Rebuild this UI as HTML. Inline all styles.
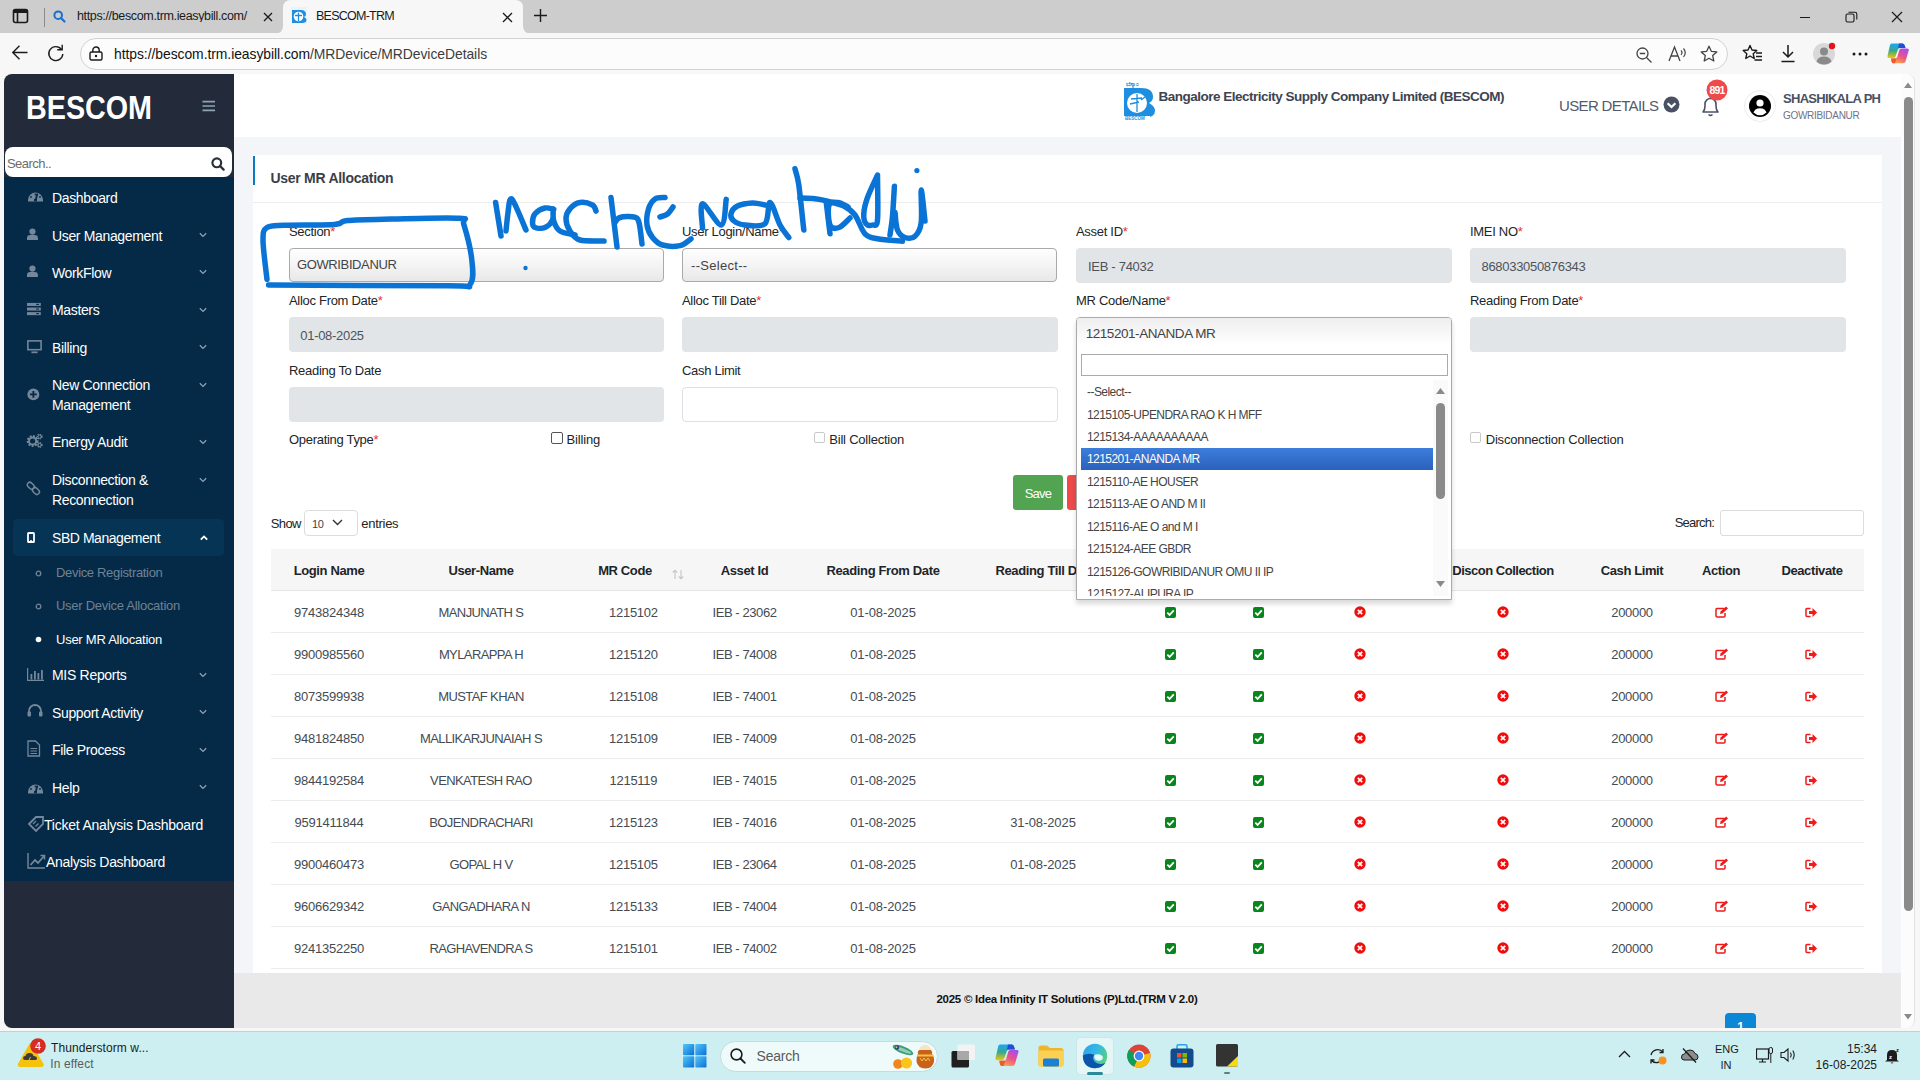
<!DOCTYPE html>
<html><head><meta charset="utf-8">
<style>
*{box-sizing:border-box;margin:0;padding:0}
html,body{width:1920px;height:1080px;overflow:hidden;background:#f7f7f7;font-family:"Liberation Sans",sans-serif;color:#333;position:relative}
.a{position:absolute}
.t{position:absolute;white-space:nowrap;line-height:1}
</style></head><body>

<div class="a" style="left:0px;top:0px;width:1920px;height:33px;background:#cdcdcd;"></div>
<div class="a" style="left:0px;top:33px;width:1920px;height:41px;background:#f7f7f7;"></div>
<svg class="a" style="left:12px;top:8px;" width="18" height="17" viewBox="0 0 18 17"><rect x="1.5" y="1.5" width="14" height="13" rx="2" fill="none" stroke="#1a1a1a" stroke-width="1.6"/><rect x="1.5" y="1.5" width="14" height="3.5" fill="#1a1a1a"/><line x1="5.5" y1="4" x2="5.5" y2="15" stroke="#1a1a1a" stroke-width="1.6"/></svg>
<div class="a" style="left:44px;top:8px;width:1px;height:19px;background:#8a8a8a;"></div>
<svg class="a" style="left:53px;top:10px;" width="13" height="13" viewBox="0 0 13 13"><circle cx="5.2" cy="5.2" r="3.8" fill="none" stroke="#1b6fd0" stroke-width="2"/><line x1="8" y1="8" x2="11.5" y2="11.5" stroke="#1b6fd0" stroke-width="2.2" stroke-linecap="round"/></svg>
<div class="t" style="left:77px;top:9.88px;font-size:12.5px;color:#1a1a1a;letter-spacing:-0.35px;width:176px;overflow:hidden;">https://bescom.trm.ieasybill.com/</div>
<svg class="a" style="left:263px;top:12px;" width="10" height="10" viewBox="0 0 10 10"><path d="M1 1L9 9M9 1L1 9" stroke="#1a1a1a" stroke-width="1.3"/></svg>
<svg class="a" style="left:275px;top:0px;" width="256" height="34" viewBox="0 0 256 34"><path d="M0 33.5 Q8 33.5 8 25.5 L8 8 Q8 0 16 0 L240 0 Q248 0 248 8 L248 25.5 Q248 33.5 256 33.5 L256 34 L0 34Z" fill="#f7f7f7"/></svg>
<svg class="a" style="left:291px;top:7px;" width="16" height="17" viewBox="0 0 16 17"><rect x="0" y="0" width="16" height="17" fill="#e8f3fb"/><path d="M1 3 H10 Q15 3 15 7.5 Q15 9 13 10 Q15.5 11 15.5 13 Q15.5 16 11 16 H1Z" fill="#1e8fe0"/><circle cx="7.5" cy="9.5" r="4.8" fill="#fff"/><path d="M7.5 5.5V14M4 8.5H11" stroke="#1e8fe0" stroke-width="1.3"/></svg>
<div class="t" style="left:316px;top:9.88px;font-size:12.5px;color:#1a1a1a;letter-spacing:-0.75px;">BESCOM-TRM</div>
<svg class="a" style="left:502px;top:12px;" width="11" height="11" viewBox="0 0 11 11"><path d="M1 1L10 10M10 1L1 10" stroke="#1a1a1a" stroke-width="1.3"/></svg>
<svg class="a" style="left:533px;top:8px;" width="15" height="15" viewBox="0 0 15 15"><path d="M7.5 1V14M1 7.5H14" stroke="#1a1a1a" stroke-width="1.4"/></svg>
<div class="a" style="left:1800px;top:17px;width:10px;height:1px;background:#1a1a1a;"></div>
<svg class="a" style="left:1845px;top:11px;" width="13" height="12" viewBox="0 0 13 12"><rect x="1" y="3" width="8" height="8" rx="1.5" fill="none" stroke="#1a1a1a" stroke-width="1.1"/><path d="M3.5 1.2H10a1.8 1.8 0 0 1 1.8 1.8V8.5" fill="none" stroke="#1a1a1a" stroke-width="1.1"/></svg>
<svg class="a" style="left:1891px;top:11px;" width="12" height="12" viewBox="0 0 12 12"><path d="M1 1L11 11M11 1L1 11" stroke="#1a1a1a" stroke-width="1.2"/></svg>
<svg class="a" style="left:11px;top:44px;" width="18" height="17" viewBox="0 0 18 17"><path d="M16.5 8.5H2M8.5 1.8L1.8 8.5L8.5 15.2" fill="none" stroke="#1a1a1a" stroke-width="1.4"/></svg>
<svg class="a" style="left:47px;top:44px;" width="18" height="19" viewBox="0 0 18 19"><path d="M14.5 5.5A7 7 0 1 0 15.8 10" fill="none" stroke="#1a1a1a" stroke-width="1.4"/><path d="M10.2 5.8H15.2V0.8" fill="none" stroke="#1a1a1a" stroke-width="1.4"/></svg>
<div class="a" style="left:80px;top:38px;width:1648px;height:32px;background:#fcfcfc;border:1px solid #d2d2d2;border-radius:16px;"></div>
<svg class="a" style="left:89px;top:46px;" width="14" height="15" viewBox="0 0 14 15"><rect x="1" y="6" width="12" height="8" rx="1.5" fill="none" stroke="#1a1a1a" stroke-width="1.4"/><path d="M3.8 6V4.2a3.2 3.2 0 0 1 6.4 0V6" fill="none" stroke="#1a1a1a" stroke-width="1.4"/><circle cx="7" cy="10" r="1.2" fill="#1a1a1a"/></svg>
<div class="t" style="left:114px;top:47.69px;font-size:13.9px;color:#111;letter-spacing:-0.05px;"><span style="color:#111">https://bescom.trm.ieasybill.com</span><span style="color:#3c3c3c">/MRDevice/MRDeviceDetails</span></div>
<svg class="a" style="left:1636px;top:47px;" width="17" height="16" viewBox="0 0 17 16"><circle cx="6.5" cy="6.5" r="5.5" fill="none" stroke="#444" stroke-width="1.3"/><path d="M3.8 6.5H9.2M10.5 10.5L15.5 15.5" stroke="#444" stroke-width="1.3"/></svg>
<svg class="a" style="left:1668px;top:45px;" width="19" height="18" viewBox="0 0 19 18"><path d="M1 16L6.5 2L12 16M3 11H10" fill="none" stroke="#444" stroke-width="1.3"/><path d="M13 5.5Q15 7.5 13 10M15.5 3.5Q19 7.5 15.5 12" fill="none" stroke="#444" stroke-width="1.2"/></svg>
<svg class="a" style="left:1700px;top:45px;" width="18" height="18" viewBox="0 0 18 18"><path d="M9 1.2L11.3 6.3L16.8 6.9L12.7 10.6L13.8 16L9 13.3L4.2 16L5.3 10.6L1.2 6.9L6.7 6.3Z" fill="none" stroke="#444" stroke-width="1.3" stroke-linejoin="round"/></svg>
<svg class="a" style="left:1742px;top:44px;" width="21" height="19" viewBox="0 0 21 19"><path d="M8 1.5L10 6L14.8 6.5L11.2 9.7L12.2 14.5L8 12L3.8 14.5L4.8 9.7L1.2 6.5L6 6Z" fill="none" stroke="#1a1a1a" stroke-width="1.4" stroke-linejoin="round"/><path d="M14 9H20M14 12.5H20M12.5 16H20" stroke="#1a1a1a" stroke-width="1.4"/></svg>
<svg class="a" style="left:1780px;top:44px;" width="16" height="19" viewBox="0 0 16 19"><path d="M8 1V13M3 8L8 13L13 8M1.5 17.5H14.5" fill="none" stroke="#1a1a1a" stroke-width="1.5"/></svg>
<svg class="a" style="left:1812px;top:42px;" width="24" height="24" viewBox="0 0 24 24"><circle cx="12" cy="12" r="11" fill="#d8d8d8"/><circle cx="12" cy="9.5" r="4" fill="#8a8a8a"/><path d="M4.5 19.5Q6 14.5 12 14.5Q18 14.5 19.5 19.5Q16.5 22.5 12 22.5Q7.5 22.5 4.5 19.5Z" fill="#8a8a8a"/><circle cx="20" cy="4" r="3.2" fill="#e0161e"/></svg>
<svg class="a" style="left:1852px;top:52px;" width="16" height="4" viewBox="0 0 16 4"><circle cx="2" cy="2" r="1.5" fill="#1a1a1a"/><circle cx="8" cy="2" r="1.5" fill="#1a1a1a"/><circle cx="14" cy="2" r="1.5" fill="#1a1a1a"/></svg>
<svg class="a" style="left:1887px;top:43px;" width="23" height="22" viewBox="0 0 23 22"><defs><linearGradient id="cpba" x1="0" y1="0" x2="0" y2="1"><stop offset="0" stop-color="#19a6f7"/><stop offset="0.5" stop-color="#3aa88a"/><stop offset="1" stop-color="#f0c800"/></linearGradient><linearGradient id="cpbb" x1="0.8" y1="0" x2="0.3" y2="1"><stop offset="0" stop-color="#a24df0"/><stop offset="0.5" stop-color="#ec528a"/><stop offset="1" stop-color="#fba648"/></linearGradient></defs><g transform="scale(1)"><path d="M4.5 0.5H15.5Q17 0.5 17.5 2L18.5 5H13Q11.5 5 11 6.5L8.5 13.5Q8 15 6.5 15H2Q0 15 0.5 13L3 2Q3.5 0.5 4.5 0.5Z" fill="url(#cpba)"/><path d="M12 0.5H15.5Q17 0.5 17.5 2L18.5 5H11.2Z" fill="#1f4fd6"/><path d="M14 5.5H20Q22.3 5.5 21.7 7.5L18.5 18.5Q18 20.3 16 20.3H6.5Q5 20.3 4.6 18.8L4 15.5H8Q9.8 15.5 10.3 13.8L12.3 7Q12.8 5.5 14 5.5Z" fill="url(#cpbb)"/><path d="M4 15.5H9.5L8 20.3H6.5Q5 20.3 4.6 18.8Z" fill="#f05a2a"/></g></svg>
<div class="a" style="left:4px;top:74px;width:1911px;height:954px;background:#ffffff;border-radius:8px;overflow:hidden;"></div>
<div class="a" style="left:4px;top:74px;width:230px;height:954px;background:#232b3b;border-radius:8px 0 0 8px;"></div>
<div class="a" style="left:4px;top:177px;width:230px;height:704px;background:#042a47;"></div>
<div class="t" style="left:26px;top:90.75px;font-size:33px;color:#ffffff;font-weight:bold;transform:scaleX(0.87);transform-origin:0 0;">BESCOM</div>
<svg class="a" style="left:202px;top:100px;" width="14" height="12" viewBox="0 0 14 12"><path d="M0.5 1.6H13M0.5 6H13M0.5 10.4H13" stroke="#8fa3b3" stroke-width="1.7"/></svg>
<div class="a" style="left:5px;top:147px;width:227px;height:30px;background:#ffffff;border-radius:8px;"></div>
<div class="t" style="left:7px;top:156.95px;font-size:13px;color:#6c6c6c;letter-spacing:-0.55px;">Search..</div>
<svg class="a" style="left:211px;top:157px;" width="14" height="14" viewBox="0 0 14 14"><circle cx="5.8" cy="5.8" r="4.4" fill="none" stroke="#2b2f38" stroke-width="2.1"/><path d="M9 9L12.6 12.6" stroke="#2b2f38" stroke-width="2.3" stroke-linecap="round"/></svg>
<div class="t" style="left:52px;top:190.60px;font-size:14px;color:#ffffff;letter-spacing:-0.35px;">Dashboard</div>
<svg class="a" style="left:27px;top:187px;" width="18" height="17" viewBox="0 0 18 17"><g transform="scale(1)"><path d="M1 13A7.5 7.5 0 0 1 16 13V14.5H1Z" fill="#75879a"/><path d="M8.5 13.5L10.5 6.5" stroke="#042a47" stroke-width="1.8"/><circle cx="8.5" cy="13" r="1.6" fill="#042a47"/><circle cx="4" cy="10" r="0.9" fill="#042a47"/><circle cx="13" cy="10" r="0.9" fill="#042a47"/><circle cx="8.5" cy="7.5" r="0.9" fill="#042a47"/></g></svg>
<div class="t" style="left:52px;top:228.60px;font-size:14px;color:#ffffff;letter-spacing:-0.35px;">User Management</div>
<svg class="a" style="left:27px;top:228px;" width="18" height="17" viewBox="0 0 18 17"><g transform="scale(0.78)"><circle cx="7" cy="4.5" r="4" fill="#75879a"/><path d="M0 15.5V13Q0 9 4 9H10Q14 9 14 13V15.5Z" fill="#75879a"/></g></svg>
<svg class="a" style="left:198.5px;top:232.0px;" width="8" height="6" viewBox="0 0 8 6"><path d="M0.8 1.2L4 4.4L7.2 1.2" fill="none" stroke="#8fa0b2" stroke-width="1.3"/></svg>
<div class="t" style="left:52px;top:265.60px;font-size:14px;color:#ffffff;letter-spacing:-0.35px;">WorkFlow</div>
<svg class="a" style="left:27px;top:265px;" width="18" height="17" viewBox="0 0 18 17"><g transform="scale(0.78)"><circle cx="7" cy="4.5" r="4" fill="#75879a"/><path d="M0 15.5V13Q0 9 4 9H10Q14 9 14 13V15.5Z" fill="#75879a"/></g></svg>
<svg class="a" style="left:198.5px;top:269.0px;" width="8" height="6" viewBox="0 0 8 6"><path d="M0.8 1.2L4 4.4L7.2 1.2" fill="none" stroke="#8fa0b2" stroke-width="1.3"/></svg>
<div class="t" style="left:52px;top:303.10px;font-size:14px;color:#ffffff;letter-spacing:-0.35px;">Masters</div>
<svg class="a" style="left:27px;top:302px;" width="18" height="17" viewBox="0 0 18 17"><g transform="scale(0.92)"><rect x="0" y="1" width="15" height="3.3" fill="#75879a"/><rect x="0" y="6" width="15" height="3.3" fill="#75879a"/><rect x="0" y="11" width="15" height="3.3" fill="#75879a"/><rect x="10" y="2" width="3" height="1.2" fill="#042a47"/><rect x="10" y="7" width="3" height="1.2" fill="#042a47"/><rect x="10" y="12" width="3" height="1.2" fill="#042a47"/></g></svg>
<svg class="a" style="left:198.5px;top:306.5px;" width="8" height="6" viewBox="0 0 8 6"><path d="M0.8 1.2L4 4.4L7.2 1.2" fill="none" stroke="#8fa0b2" stroke-width="1.3"/></svg>
<div class="t" style="left:52px;top:340.60px;font-size:14px;color:#ffffff;letter-spacing:-0.35px;">Billing</div>
<svg class="a" style="left:27px;top:339.5px;" width="18" height="17" viewBox="0 0 18 17"><g transform="scale(0.88)"><rect x="1" y="1" width="15" height="10" fill="none" stroke="#75879a" stroke-width="1.8"/><rect x="5" y="13" width="7" height="2" fill="#75879a"/></g></svg>
<svg class="a" style="left:198.5px;top:344.0px;" width="8" height="6" viewBox="0 0 8 6"><path d="M0.8 1.2L4 4.4L7.2 1.2" fill="none" stroke="#8fa0b2" stroke-width="1.3"/></svg>
<div class="t" style="left:52px;top:378.10px;font-size:14px;color:#ffffff;letter-spacing:-0.35px;">New Connection</div>
<div class="t" style="left:52px;top:398.10px;font-size:14px;color:#ffffff;letter-spacing:-0.35px;">Management</div>
<svg class="a" style="left:27px;top:388px;" width="18" height="17" viewBox="0 0 18 17"><g transform="scale(0.85)"><circle cx="7.5" cy="7.5" r="7" fill="#75879a"/><path d="M7.5 3.5V11.5M3.5 7.5H11.5" stroke="#042a47" stroke-width="2.2"/></g></svg>
<svg class="a" style="left:198.5px;top:381.5px;" width="8" height="6" viewBox="0 0 8 6"><path d="M0.8 1.2L4 4.4L7.2 1.2" fill="none" stroke="#8fa0b2" stroke-width="1.3"/></svg>
<div class="t" style="left:52px;top:435.10px;font-size:14px;color:#ffffff;letter-spacing:-0.35px;">Energy Audit</div>
<svg class="a" style="left:26px;top:434px;" width="18" height="17" viewBox="0 0 18 17"><g transform="scale(1)"><circle cx="6.6" cy="7" r="4.8" fill="none" stroke="#75879a" stroke-width="2.2" stroke-dasharray="1.9 1.3"/><circle cx="6.6" cy="7" r="3.6" fill="none" stroke="#75879a" stroke-width="2"/><circle cx="13.6" cy="2.6" r="2.2" fill="none" stroke="#75879a" stroke-width="1.6" stroke-dasharray="1.1 0.8"/><circle cx="13.6" cy="2.6" r="1.6" fill="none" stroke="#75879a" stroke-width="1"/><circle cx="13.6" cy="11" r="2.2" fill="none" stroke="#75879a" stroke-width="1.6" stroke-dasharray="1.1 0.8"/><circle cx="13.6" cy="11" r="1.6" fill="none" stroke="#75879a" stroke-width="1"/></g></svg>
<svg class="a" style="left:198.5px;top:438.5px;" width="8" height="6" viewBox="0 0 8 6"><path d="M0.8 1.2L4 4.4L7.2 1.2" fill="none" stroke="#8fa0b2" stroke-width="1.3"/></svg>
<div class="t" style="left:52px;top:473.10px;font-size:14px;color:#ffffff;letter-spacing:-0.35px;">Disconnection &amp;</div>
<div class="t" style="left:52px;top:493.10px;font-size:14px;color:#ffffff;letter-spacing:-0.35px;">Reconnection</div>
<svg class="a" style="left:26px;top:481px;" width="18" height="17" viewBox="0 0 18 17"><g transform="scale(1)"><rect x="1" y="2.2" width="7.5" height="5" rx="2.3" transform="rotate(45 4.75 4.7)" fill="none" stroke="#75879a" stroke-width="1.5"/><rect x="6.2" y="7.5" width="7.5" height="5" rx="2.3" transform="rotate(45 9.95 10)" fill="none" stroke="#75879a" stroke-width="1.5"/></g></svg>
<svg class="a" style="left:198.5px;top:476.5px;" width="8" height="6" viewBox="0 0 8 6"><path d="M0.8 1.2L4 4.4L7.2 1.2" fill="none" stroke="#8fa0b2" stroke-width="1.3"/></svg>
<div class="a" style="left:13px;top:519px;width:211px;height:37px;background:#053455;border-radius:4px;"></div>
<div class="t" style="left:52px;top:531.10px;font-size:14px;color:#ffffff;letter-spacing:-0.45px;">SBD Management</div>
<svg class="a" style="left:27px;top:532px;" width="8" height="11" viewBox="0 0 8 11"><g transform="scale(1)"><rect x="1" y="1" width="6" height="9" rx="0.6" fill="none" stroke="#fff" stroke-width="1.8"/><rect x="3" y="8.2" width="2" height="1" fill="#fff"/></g></svg>
<svg class="a" style="left:199.5px;top:535px;" width="8" height="6" viewBox="0 0 8 6"><path d="M0.8 4.6L4 1.4L7.2 4.6" fill="none" stroke="#ffffff" stroke-width="1.8"/></svg>
<div class="t" style="left:56px;top:566.45px;font-size:13px;color:#6f8294;letter-spacing:-0.33px;">Device Registration</div>
<svg class="a" style="left:35px;top:570px;" width="7" height="7" viewBox="0 0 7 7"><circle cx="3.5" cy="3.5" r="2.3" fill="none" stroke="#6f8294" stroke-width="1.3"/></svg>
<div class="t" style="left:56px;top:599.45px;font-size:13px;color:#6f8294;letter-spacing:-0.28px;">User Device Allocation</div>
<svg class="a" style="left:35px;top:603px;" width="7" height="7" viewBox="0 0 7 7"><circle cx="3.5" cy="3.5" r="2.3" fill="none" stroke="#6f8294" stroke-width="1.3"/></svg>
<div class="t" style="left:56px;top:632.95px;font-size:13px;color:#ffffff;letter-spacing:-0.25px;">User MR Allocation</div>
<svg class="a" style="left:35px;top:636px;" width="7" height="7" viewBox="0 0 7 7"><circle cx="3.5" cy="3.5" r="2.8" fill="#ffffff"/></svg>
<div class="t" style="left:52px;top:668.10px;font-size:14px;color:#ffffff;letter-spacing:-0.3px;">MIS Reports</div>
<svg class="a" style="left:27px;top:668px;" width="18" height="13" viewBox="0 0 18 13"><g transform="scale(1)"><path d="M0.6 0V12.4H17" fill="none" stroke="#75879a" stroke-width="1.2"/><rect x="3.5" y="6" width="1.8" height="5.5" fill="#75879a"/><rect x="7" y="3" width="1.8" height="8.5" fill="#75879a"/><rect x="10.5" y="5" width="1.8" height="6.5" fill="#75879a"/><rect x="14" y="2" width="1.8" height="9.5" fill="#75879a"/></g></svg>
<svg class="a" style="left:198.5px;top:671.5px;" width="8" height="6" viewBox="0 0 8 6"><path d="M0.8 1.2L4 4.4L7.2 1.2" fill="none" stroke="#8fa0b2" stroke-width="1.3"/></svg>
<div class="t" style="left:52px;top:705.60px;font-size:14px;color:#ffffff;letter-spacing:-0.35px;">Support Activity</div>
<svg class="a" style="left:27px;top:703px;" width="18" height="17" viewBox="0 0 18 17"><g transform="scale(1)"><path d="M2 10V8A6 6 0 0 1 14 8V10" fill="none" stroke="#75879a" stroke-width="1.8"/><rect x="0.5" y="8.5" width="3.5" height="5" rx="1" fill="#75879a"/><rect x="12" y="8.5" width="3.5" height="5" rx="1" fill="#75879a"/></g></svg>
<svg class="a" style="left:198.5px;top:709.0px;" width="8" height="6" viewBox="0 0 8 6"><path d="M0.8 1.2L4 4.4L7.2 1.2" fill="none" stroke="#8fa0b2" stroke-width="1.3"/></svg>
<div class="t" style="left:52px;top:743.10px;font-size:14px;color:#ffffff;letter-spacing:-0.35px;">File Process</div>
<svg class="a" style="left:27px;top:740px;" width="14" height="17" viewBox="0 0 14 17"><g transform="scale(1)"><path d="M1 1H8.5L12.5 5V16H1Z" fill="none" stroke="#75879a" stroke-width="1.3"/><path d="M3.5 8.5H10M3.5 11H10M3.5 13.5H10" stroke="#75879a" stroke-width="1.1"/></g></svg>
<svg class="a" style="left:198.5px;top:746.5px;" width="8" height="6" viewBox="0 0 8 6"><path d="M0.8 1.2L4 4.4L7.2 1.2" fill="none" stroke="#8fa0b2" stroke-width="1.3"/></svg>
<div class="t" style="left:52px;top:780.60px;font-size:14px;color:#ffffff;letter-spacing:-0.35px;">Help</div>
<svg class="a" style="left:27px;top:779px;" width="18" height="17" viewBox="0 0 18 17"><g transform="scale(1)"><path d="M1 13A7.5 7.5 0 0 1 16 13V14.5H1Z" fill="#75879a"/><path d="M8.5 13.5L10.5 6.5" stroke="#042a47" stroke-width="1.8"/><circle cx="8.5" cy="13" r="1.6" fill="#042a47"/><circle cx="4" cy="10" r="0.9" fill="#042a47"/><circle cx="13" cy="10" r="0.9" fill="#042a47"/><circle cx="8.5" cy="7.5" r="0.9" fill="#042a47"/></g></svg>
<svg class="a" style="left:198.5px;top:784.0px;" width="8" height="6" viewBox="0 0 8 6"><path d="M0.8 1.2L4 4.4L7.2 1.2" fill="none" stroke="#8fa0b2" stroke-width="1.3"/></svg>
<div class="t" style="left:44px;top:818.10px;font-size:14px;color:#ffffff;letter-spacing:-0.22px;">Ticket Analysis Dashboard</div>
<svg class="a" style="left:27px;top:815px;" width="18" height="17" viewBox="0 0 18 17"><g transform="scale(1)"><path d="M2 9L9 2L16 2L16 9L9 16Z" fill="none" stroke="#75879a" stroke-width="1.8" transform="rotate(0)"/><path d="M6 9L9 6M8.5 11.5L11.5 8.5" stroke="#75879a" stroke-width="1.2"/></g></svg>
<div class="t" style="left:46px;top:855.10px;font-size:14px;color:#ffffff;letter-spacing:-0.3px;">Analysis Dashboard</div>
<svg class="a" style="left:27px;top:852px;" width="19" height="17" viewBox="0 0 19 17"><g transform="scale(1)"><path d="M1 1V16H18" fill="none" stroke="#75879a" stroke-width="1.4"/><path d="M3.5 13L8 8L11 11L17 4" fill="none" stroke="#75879a" stroke-width="1.8"/><path d="M13.5 3.5H17.5V7.5" fill="none" stroke="#75879a" stroke-width="1.5"/></g></svg>
<div class="a" style="left:234px;top:74px;width:1667px;height:63px;background:#ffffff;"></div>
<div class="a" style="left:234px;top:137px;width:1667px;height:836px;background:#f4f5f8;"></div>
<div class="a" style="left:253px;top:155px;width:1629px;height:818px;background:#ffffff;"></div>
<div class="a" style="left:234px;top:973px;width:1667px;height:55px;background:#e9e9e9;"></div>
<div class="a" style="left:1901px;top:74px;width:14px;height:954px;background:#fcfcfc;border-radius:0 8px 8px 0;border-right:1px solid #e2e2e2;"></div>
<svg class="a" style="left:1903px;top:81px;" width="10" height="8" viewBox="0 0 10 8"><path d="M1 7L5 1.5L9 7Z" fill="#8a8a8a"/></svg>
<div class="a" style="left:1904px;top:97px;width:9px;height:814px;background:#8a8a8a;border-radius:5px;"></div>
<svg class="a" style="left:1903px;top:1013px;" width="10" height="8" viewBox="0 0 10 8"><path d="M1 1L5 6.5L9 1Z" fill="#8a8a8a"/></svg>
<svg class="a" style="left:1124px;top:80px;" width="31" height="40" viewBox="0 0 31 40"><text x="2" y="6" font-size="6" font-family="Liberation Sans" fill="#1e8fe0" font-weight="bold">ಬೆಸ್ಕಾಂ</text><path d="M0 8 H17 Q29 8 29 17 Q29 21 25 23 Q31 26 31 31 Q31 38 19 38 H0Z" fill="#1e8fe0"/><circle cx="13" cy="23" r="10" fill="#ffffff"/><path d="M13 14V32M7 19L18 18M6 24L15 22M17 20L21 17" stroke="#1e8fe0" stroke-width="1.3"/><rect x="0" y="36" width="26" height="4" fill="#ffffff"/><text x="1" y="40" font-size="4.5" font-family="Liberation Sans" font-weight="bold" fill="#1e8fe0">BESCOM</text></svg>
<div class="t" style="left:1158.5px;top:89.83px;font-size:13.5px;color:#3e4451;font-weight:bold;letter-spacing:-0.5px;">Bangalore Electricity Supply Company Limited (BESCOM)</div>
<div class="t" style="left:1559px;top:98.25px;font-size:15px;color:#535a6b;letter-spacing:-0.65px;">USER DETAILS</div>
<svg class="a" style="left:1663px;top:96px;" width="17" height="17" viewBox="0 0 17 17"><circle cx="8.5" cy="8.5" r="8" fill="#4a5163"/><path d="M4.6 7.2L8.5 11L12.4 7.2" fill="none" stroke="#fff" stroke-width="2.3"/></svg>
<svg class="a" style="left:1700px;top:95px;" width="21" height="23" viewBox="0 0 21 23"><path d="M3 17 Q5 15 5 11 V9 A5.5 5.5 0 0 1 16 9 V11 Q16 15 18 17 Z" fill="none" stroke="#4a5163" stroke-width="1.6" stroke-linejoin="round"/><path d="M8.5 19.5 Q10.5 21.5 12.5 19.5" fill="none" stroke="#4a5163" stroke-width="1.4"/></svg>
<svg class="a" style="left:1706px;top:79px;" width="22" height="22" viewBox="0 0 22 22"><circle cx="11" cy="11" r="10.5" fill="#ef4a4a"/><text x="11" y="15" text-anchor="middle" font-family="Liberation Sans" font-weight="bold" font-size="10.5" letter-spacing="-0.8" fill="#fff">891</text></svg>
<svg class="a" style="left:1744px;top:90px;" width="32" height="32" viewBox="0 0 32 32"><circle cx="16" cy="16" r="15.5" fill="#fff" stroke="#ececec" stroke-width="1"/><circle cx="16" cy="16" r="11" fill="#000"/><circle cx="16" cy="13" r="3.6" fill="#fff"/><path d="M9.5 22.5Q11 18.2 16 18.2Q21 18.2 22.5 22.5Q19.5 25.3 16 25.3Q12.5 25.3 9.5 22.5Z" fill="#fff"/></svg>
<div class="t" style="left:1783px;top:92.25px;font-size:13px;color:#4a5163;font-weight:bold;letter-spacing:-0.7px;">SHASHIKALA PH</div>
<div class="t" style="left:1783px;top:110.80px;font-size:10px;color:#6b7385;letter-spacing:-0.3px;">GOWRIBIDANUR</div>
<div class="a" style="left:253px;top:156px;width:2px;height:29px;background:#0a7bc2;"></div>
<div class="t" style="left:270.5px;top:170.80px;font-size:14px;color:#3a3f48;font-weight:bold;letter-spacing:-0.28px;">User MR Allocation</div>
<div class="a" style="left:253px;top:202px;width:1629px;height:1px;background:#ececec;"></div>
<div class="t" style="left:289px;top:225.25px;font-size:13px;color:#212529;letter-spacing:-0.3px;"><span>Section</span><span style="color:#e3342f">*</span></div>
<div class="t" style="left:682px;top:225.25px;font-size:13px;color:#212529;letter-spacing:-0.3px;"><span>User Login/Name</span><span style="color:#e3342f">*</span></div>
<div class="t" style="left:1076px;top:224.95px;font-size:13px;color:#212529;letter-spacing:-0.3px;"><span>Asset ID</span><span style="color:#e3342f">*</span></div>
<div class="t" style="left:1470px;top:224.95px;font-size:13px;color:#212529;letter-spacing:-0.3px;"><span>IMEI NO</span><span style="color:#e3342f">*</span></div>
<div class="a" style="left:289px;top:248px;width:375px;height:34px;background:linear-gradient(#ffffff 0%,#f4f4f4 50%,#e8e8e8 100%);border:1px solid #aaaaaa;border-radius:4px;"></div>
<div class="t" style="left:297px;top:258.45px;font-size:13px;color:#444;letter-spacing:-0.38px;">GOWRIBIDANUR</div>
<div class="a" style="left:682px;top:248px;width:375px;height:34px;background:linear-gradient(#ffffff 0%,#f4f4f4 50%,#e8e8e8 100%);border:1px solid #aaaaaa;border-radius:4px;"></div>
<div class="t" style="left:691px;top:259.25px;font-size:13px;color:#444;letter-spacing:0.3px;">--Select--</div>
<div class="a" style="left:1076px;top:248px;width:376px;height:35px;background:#e2e5e8;border-radius:4px;"></div>
<div class="t" style="left:1088px;top:259.95px;font-size:13px;color:#4d5359;letter-spacing:-0.3px;">IEB - 74032</div>
<div class="a" style="left:1470px;top:248px;width:376px;height:35px;background:#e2e5e8;border-radius:4px;"></div>
<div class="t" style="left:1481.5px;top:259.95px;font-size:13px;color:#4d5359;letter-spacing:-0.3px;">868033050876343</div>
<div class="t" style="left:289px;top:294.25px;font-size:13px;color:#212529;letter-spacing:-0.3px;"><span>Alloc From Date</span><span style="color:#e3342f">*</span></div>
<div class="t" style="left:682px;top:294.25px;font-size:13px;color:#212529;letter-spacing:-0.3px;"><span>Alloc Till Date</span><span style="color:#e3342f">*</span></div>
<div class="t" style="left:1076px;top:294.25px;font-size:13px;color:#212529;letter-spacing:-0.3px;"><span>MR Code/Name</span><span style="color:#e3342f">*</span></div>
<div class="t" style="left:1470px;top:294.25px;font-size:13px;color:#212529;letter-spacing:-0.3px;"><span>Reading From Date</span><span style="color:#e3342f">*</span></div>
<div class="a" style="left:289px;top:317px;width:375px;height:35px;background:#e2e5e8;border-radius:4px;"></div>
<div class="t" style="left:300.3px;top:328.95px;font-size:13px;color:#4d5359;letter-spacing:-0.3px;">01-08-2025</div>
<div class="a" style="left:682px;top:317px;width:376px;height:35px;background:#e2e5e8;border-radius:4px;"></div>
<div class="a" style="left:1470px;top:317px;width:376px;height:35px;background:#e2e5e8;border-radius:4px;"></div>
<div class="t" style="left:289px;top:363.95px;font-size:13px;color:#212529;letter-spacing:-0.3px;"><span>Reading To Date</span></div>
<div class="t" style="left:682px;top:363.95px;font-size:13px;color:#212529;letter-spacing:-0.3px;"><span>Cash Limit</span></div>
<div class="a" style="left:289px;top:387px;width:375px;height:35px;background:#e2e5e8;border-radius:4px;"></div>
<div class="a" style="left:682px;top:387px;width:376px;height:35px;background:#ffffff;border:1px solid #dcdfe3;border-radius:4px;"></div>
<div class="t" style="left:289px;top:433.15px;font-size:13px;color:#212529;letter-spacing:-0.3px;"><span>Operating Type</span><span style="color:#e3342f">*</span></div>
<div class="a" style="left:551px;top:432px;width:12px;height:12px;background:#ffffff;border:1px solid #555;border-radius:2px;"></div>
<div class="t" style="left:566.6px;top:433.15px;font-size:13px;color:#212529;letter-spacing:-0.17px;">Billing</div>
<div class="a" style="left:814px;top:432px;width:11px;height:11px;background:#ffffff;border:1px solid #c8c8c8;border-radius:2px;"></div>
<div class="t" style="left:829.3px;top:432.95px;font-size:13px;color:#212529;letter-spacing:-0.22px;">Bill Collection</div>
<div class="a" style="left:1470px;top:432px;width:11px;height:11px;background:#ffffff;border:1px solid #c8c8c8;border-radius:2px;"></div>
<div class="t" style="left:1485.7px;top:432.65px;font-size:13px;color:#212529;letter-spacing:-0.19px;">Disconnection Collection</div>
<div class="a" style="left:1013px;top:475px;width:50px;height:35px;background:#52a352;border-radius:3px;"></div>
<div class="t" style="left:1024.7px;top:486.55px;font-size:13px;color:#ffffff;letter-spacing:-0.75px;">Save</div>
<div class="a" style="left:1067px;top:475px;width:60px;height:35px;background:#ee4a4a;border-radius:3px;"></div>
<div class="t" style="left:270.8px;top:516.95px;font-size:13px;color:#212529;letter-spacing:-0.63px;">Show</div>
<div class="a" style="left:304px;top:510px;width:54px;height:26px;background:#ffffff;border:1px solid #dcdcdc;border-radius:4px;"></div>
<div class="t" style="left:312px;top:518.65px;font-size:11px;color:#444;letter-spacing:-0.3px;">10</div>
<svg class="a" style="left:332px;top:519px;" width="11" height="7" viewBox="0 0 11 7"><path d="M1 1L5.5 5.5L10 1" fill="none" stroke="#333" stroke-width="1.4"/></svg>
<div class="t" style="left:361.3px;top:516.95px;font-size:13px;color:#212529;letter-spacing:-0.29px;">entries</div>
<div class="t" style="left:1674.7px;top:516.25px;font-size:13px;color:#212529;letter-spacing:-0.77px;">Search:</div>
<div class="a" style="left:1720px;top:510px;width:144px;height:26px;background:#ffffff;border:1px solid #dcdcdc;border-radius:3px;"></div>
<div class="a" style="left:271px;top:549px;width:1593px;height:42px;background:#f6f6f6;"></div>
<div class="a" style="left:271px;top:590px;width:1593px;height:1px;background:#e6e6e6;"></div>
<div class="t" style="left:29px;width:600px;text-align:center;top:564.15px;font-size:13px;color:#212529;font-weight:bold;letter-spacing:-0.38px;">Login Name</div>
<div class="t" style="left:181px;width:600px;text-align:center;top:564.15px;font-size:13px;color:#212529;font-weight:bold;letter-spacing:-0.38px;">User-Name</div>
<div class="t" style="left:325px;width:600px;text-align:center;top:564.15px;font-size:13px;color:#212529;font-weight:bold;letter-spacing:-0.38px;">MR Code</div>
<div class="t" style="left:444.5px;width:600px;text-align:center;top:564.15px;font-size:13px;color:#212529;font-weight:bold;letter-spacing:-0.38px;">Asset Id</div>
<div class="t" style="left:583px;width:600px;text-align:center;top:564.15px;font-size:13px;color:#212529;font-weight:bold;letter-spacing:-0.36px;">Reading From Date</div>
<div class="t" style="left:745px;width:600px;text-align:center;top:564.15px;font-size:13px;color:#212529;font-weight:bold;letter-spacing:-0.36px;">Reading Till Date</div>
<div class="t" style="left:870px;width:600px;text-align:center;top:564.15px;font-size:13px;color:#212529;font-weight:bold;letter-spacing:-0.36px;">Billing</div>
<div class="t" style="left:958px;width:600px;text-align:center;top:564.15px;font-size:13px;color:#212529;font-weight:bold;letter-spacing:-0.36px;">Bill Coll</div>
<div class="t" style="left:1060px;width:600px;text-align:center;top:564.15px;font-size:13px;color:#212529;font-weight:bold;letter-spacing:-0.36px;">Discon</div>
<div class="t" style="left:1203px;width:600px;text-align:center;top:564.15px;font-size:13px;color:#212529;font-weight:bold;letter-spacing:-0.49px;">Discon Collection</div>
<div class="t" style="left:1332px;width:600px;text-align:center;top:564.15px;font-size:13px;color:#212529;font-weight:bold;letter-spacing:-0.4px;">Cash Limit</div>
<div class="t" style="left:1421px;width:600px;text-align:center;top:564.15px;font-size:13px;color:#212529;font-weight:bold;letter-spacing:-0.4px;">Action</div>
<div class="t" style="left:1512px;width:600px;text-align:center;top:564.15px;font-size:13px;color:#212529;font-weight:bold;letter-spacing:-0.4px;">Deactivate</div>
<svg class="a" style="left:672px;top:569px;" width="12" height="11" viewBox="0 0 12 11"><path d="M3 10V1.5M0.8 3.5L3 1.2L5.2 3.5" fill="none" stroke="#c5c5c5" stroke-width="1.1"/><path d="M9 1V9.5M6.8 7.5L9 9.8L11.2 7.5" fill="none" stroke="#c5c5c5" stroke-width="1.1"/></svg>
<div class="t" style="left:29px;width:600px;text-align:center;top:605.95px;font-size:13px;color:#444b52;letter-spacing:-0.23px;">9743824348</div>
<div class="t" style="left:181px;width:600px;text-align:center;top:605.95px;font-size:13px;color:#444b52;letter-spacing:-0.6px;">MANJUNATH S</div>
<div class="t" style="left:333.4px;width:600px;text-align:center;top:605.95px;font-size:13px;color:#444b52;letter-spacing:-0.25px;">1215102</div>
<div class="t" style="left:444.5px;width:600px;text-align:center;top:605.95px;font-size:13px;color:#444b52;letter-spacing:-0.42px;">IEB - 23062</div>
<div class="t" style="left:583px;width:600px;text-align:center;top:605.95px;font-size:13px;color:#444b52;letter-spacing:-0.09px;">01-08-2025</div>
<svg class="a" style="left:1164.5px;top:606.9px;" width="11" height="11" viewBox="0 0 11 11"><rect x="0" y="0" width="11" height="11" rx="2" fill="#07871b"/><path d="M2.3 5.6L4.6 7.9L8.8 3.4" fill="none" stroke="#fff" stroke-width="1.8"/></svg>
<svg class="a" style="left:1252.5px;top:606.9px;" width="11" height="11" viewBox="0 0 11 11"><rect x="0" y="0" width="11" height="11" rx="2" fill="#07871b"/><path d="M2.3 5.6L4.6 7.9L8.8 3.4" fill="none" stroke="#fff" stroke-width="1.8"/></svg>
<svg class="a" style="left:1354px;top:606.4px;" width="12" height="12" viewBox="0 0 12 12"><circle cx="6" cy="6" r="5.7" fill="#f20d0d"/><path d="M3.8 3.8L8.2 8.2M8.2 3.8L3.8 8.2" stroke="#fff" stroke-width="1.7"/></svg>
<svg class="a" style="left:1497px;top:606.4px;" width="12" height="12" viewBox="0 0 12 12"><circle cx="6" cy="6" r="5.7" fill="#f20d0d"/><path d="M3.8 3.8L8.2 8.2M8.2 3.8L3.8 8.2" stroke="#fff" stroke-width="1.7"/></svg>
<div class="t" style="left:1332px;width:600px;text-align:center;top:605.95px;font-size:13px;color:#444b52;letter-spacing:-0.3px;">200000</div>
<svg class="a" style="left:1714.5px;top:606.4px;" width="14" height="12" viewBox="0 0 14 12"><path d="M9.5 2.5H2A1 1 0 0 0 1 3.5V10A1 1 0 0 0 2 11H9A1 1 0 0 0 10 10V7" fill="none" stroke="#f01a1a" stroke-width="1.5"/><path d="M5 8L5.6 5.6L11.2 0.6L13 2.4L7.4 7.4Z" fill="#f01a1a"/></svg>
<svg class="a" style="left:1805px;top:606.9px;" width="13" height="11" viewBox="0 0 13 11"><path d="M5.5 1.5H2A1 1 0 0 0 1 2.5V8.5A1 1 0 0 0 2 9.5H5.5" fill="none" stroke="#f01a1a" stroke-width="1.5"/><path d="M4 4H7.5V1L12 5.5L7.5 10V7H4Z" fill="#f01a1a"/></svg>
<div class="a" style="left:271px;top:632px;width:1593px;height:1px;background:#ececec;"></div>
<div class="t" style="left:29px;width:600px;text-align:center;top:647.95px;font-size:13px;color:#444b52;letter-spacing:-0.23px;">9900985560</div>
<div class="t" style="left:181px;width:600px;text-align:center;top:647.95px;font-size:13px;color:#444b52;letter-spacing:-0.6px;">MYLARAPPA H</div>
<div class="t" style="left:333.4px;width:600px;text-align:center;top:647.95px;font-size:13px;color:#444b52;letter-spacing:-0.25px;">1215120</div>
<div class="t" style="left:444.5px;width:600px;text-align:center;top:647.95px;font-size:13px;color:#444b52;letter-spacing:-0.42px;">IEB - 74008</div>
<div class="t" style="left:583px;width:600px;text-align:center;top:647.95px;font-size:13px;color:#444b52;letter-spacing:-0.09px;">01-08-2025</div>
<svg class="a" style="left:1164.5px;top:648.9px;" width="11" height="11" viewBox="0 0 11 11"><rect x="0" y="0" width="11" height="11" rx="2" fill="#07871b"/><path d="M2.3 5.6L4.6 7.9L8.8 3.4" fill="none" stroke="#fff" stroke-width="1.8"/></svg>
<svg class="a" style="left:1252.5px;top:648.9px;" width="11" height="11" viewBox="0 0 11 11"><rect x="0" y="0" width="11" height="11" rx="2" fill="#07871b"/><path d="M2.3 5.6L4.6 7.9L8.8 3.4" fill="none" stroke="#fff" stroke-width="1.8"/></svg>
<svg class="a" style="left:1354px;top:648.4px;" width="12" height="12" viewBox="0 0 12 12"><circle cx="6" cy="6" r="5.7" fill="#f20d0d"/><path d="M3.8 3.8L8.2 8.2M8.2 3.8L3.8 8.2" stroke="#fff" stroke-width="1.7"/></svg>
<svg class="a" style="left:1497px;top:648.4px;" width="12" height="12" viewBox="0 0 12 12"><circle cx="6" cy="6" r="5.7" fill="#f20d0d"/><path d="M3.8 3.8L8.2 8.2M8.2 3.8L3.8 8.2" stroke="#fff" stroke-width="1.7"/></svg>
<div class="t" style="left:1332px;width:600px;text-align:center;top:647.95px;font-size:13px;color:#444b52;letter-spacing:-0.3px;">200000</div>
<svg class="a" style="left:1714.5px;top:648.4px;" width="14" height="12" viewBox="0 0 14 12"><path d="M9.5 2.5H2A1 1 0 0 0 1 3.5V10A1 1 0 0 0 2 11H9A1 1 0 0 0 10 10V7" fill="none" stroke="#f01a1a" stroke-width="1.5"/><path d="M5 8L5.6 5.6L11.2 0.6L13 2.4L7.4 7.4Z" fill="#f01a1a"/></svg>
<svg class="a" style="left:1805px;top:648.9px;" width="13" height="11" viewBox="0 0 13 11"><path d="M5.5 1.5H2A1 1 0 0 0 1 2.5V8.5A1 1 0 0 0 2 9.5H5.5" fill="none" stroke="#f01a1a" stroke-width="1.5"/><path d="M4 4H7.5V1L12 5.5L7.5 10V7H4Z" fill="#f01a1a"/></svg>
<div class="a" style="left:271px;top:674px;width:1593px;height:1px;background:#ececec;"></div>
<div class="t" style="left:29px;width:600px;text-align:center;top:689.95px;font-size:13px;color:#444b52;letter-spacing:-0.23px;">8073599938</div>
<div class="t" style="left:181px;width:600px;text-align:center;top:689.95px;font-size:13px;color:#444b52;letter-spacing:-0.6px;">MUSTAF KHAN</div>
<div class="t" style="left:333.4px;width:600px;text-align:center;top:689.95px;font-size:13px;color:#444b52;letter-spacing:-0.25px;">1215108</div>
<div class="t" style="left:444.5px;width:600px;text-align:center;top:689.95px;font-size:13px;color:#444b52;letter-spacing:-0.42px;">IEB - 74001</div>
<div class="t" style="left:583px;width:600px;text-align:center;top:689.95px;font-size:13px;color:#444b52;letter-spacing:-0.09px;">01-08-2025</div>
<svg class="a" style="left:1164.5px;top:690.9px;" width="11" height="11" viewBox="0 0 11 11"><rect x="0" y="0" width="11" height="11" rx="2" fill="#07871b"/><path d="M2.3 5.6L4.6 7.9L8.8 3.4" fill="none" stroke="#fff" stroke-width="1.8"/></svg>
<svg class="a" style="left:1252.5px;top:690.9px;" width="11" height="11" viewBox="0 0 11 11"><rect x="0" y="0" width="11" height="11" rx="2" fill="#07871b"/><path d="M2.3 5.6L4.6 7.9L8.8 3.4" fill="none" stroke="#fff" stroke-width="1.8"/></svg>
<svg class="a" style="left:1354px;top:690.4px;" width="12" height="12" viewBox="0 0 12 12"><circle cx="6" cy="6" r="5.7" fill="#f20d0d"/><path d="M3.8 3.8L8.2 8.2M8.2 3.8L3.8 8.2" stroke="#fff" stroke-width="1.7"/></svg>
<svg class="a" style="left:1497px;top:690.4px;" width="12" height="12" viewBox="0 0 12 12"><circle cx="6" cy="6" r="5.7" fill="#f20d0d"/><path d="M3.8 3.8L8.2 8.2M8.2 3.8L3.8 8.2" stroke="#fff" stroke-width="1.7"/></svg>
<div class="t" style="left:1332px;width:600px;text-align:center;top:689.95px;font-size:13px;color:#444b52;letter-spacing:-0.3px;">200000</div>
<svg class="a" style="left:1714.5px;top:690.4px;" width="14" height="12" viewBox="0 0 14 12"><path d="M9.5 2.5H2A1 1 0 0 0 1 3.5V10A1 1 0 0 0 2 11H9A1 1 0 0 0 10 10V7" fill="none" stroke="#f01a1a" stroke-width="1.5"/><path d="M5 8L5.6 5.6L11.2 0.6L13 2.4L7.4 7.4Z" fill="#f01a1a"/></svg>
<svg class="a" style="left:1805px;top:690.9px;" width="13" height="11" viewBox="0 0 13 11"><path d="M5.5 1.5H2A1 1 0 0 0 1 2.5V8.5A1 1 0 0 0 2 9.5H5.5" fill="none" stroke="#f01a1a" stroke-width="1.5"/><path d="M4 4H7.5V1L12 5.5L7.5 10V7H4Z" fill="#f01a1a"/></svg>
<div class="a" style="left:271px;top:716px;width:1593px;height:1px;background:#ececec;"></div>
<div class="t" style="left:29px;width:600px;text-align:center;top:731.95px;font-size:13px;color:#444b52;letter-spacing:-0.23px;">9481824850</div>
<div class="t" style="left:181px;width:600px;text-align:center;top:731.95px;font-size:13px;color:#444b52;letter-spacing:-0.6px;">MALLIKARJUNAIAH S</div>
<div class="t" style="left:333.4px;width:600px;text-align:center;top:731.95px;font-size:13px;color:#444b52;letter-spacing:-0.25px;">1215109</div>
<div class="t" style="left:444.5px;width:600px;text-align:center;top:731.95px;font-size:13px;color:#444b52;letter-spacing:-0.42px;">IEB - 74009</div>
<div class="t" style="left:583px;width:600px;text-align:center;top:731.95px;font-size:13px;color:#444b52;letter-spacing:-0.09px;">01-08-2025</div>
<svg class="a" style="left:1164.5px;top:732.9px;" width="11" height="11" viewBox="0 0 11 11"><rect x="0" y="0" width="11" height="11" rx="2" fill="#07871b"/><path d="M2.3 5.6L4.6 7.9L8.8 3.4" fill="none" stroke="#fff" stroke-width="1.8"/></svg>
<svg class="a" style="left:1252.5px;top:732.9px;" width="11" height="11" viewBox="0 0 11 11"><rect x="0" y="0" width="11" height="11" rx="2" fill="#07871b"/><path d="M2.3 5.6L4.6 7.9L8.8 3.4" fill="none" stroke="#fff" stroke-width="1.8"/></svg>
<svg class="a" style="left:1354px;top:732.4px;" width="12" height="12" viewBox="0 0 12 12"><circle cx="6" cy="6" r="5.7" fill="#f20d0d"/><path d="M3.8 3.8L8.2 8.2M8.2 3.8L3.8 8.2" stroke="#fff" stroke-width="1.7"/></svg>
<svg class="a" style="left:1497px;top:732.4px;" width="12" height="12" viewBox="0 0 12 12"><circle cx="6" cy="6" r="5.7" fill="#f20d0d"/><path d="M3.8 3.8L8.2 8.2M8.2 3.8L3.8 8.2" stroke="#fff" stroke-width="1.7"/></svg>
<div class="t" style="left:1332px;width:600px;text-align:center;top:731.95px;font-size:13px;color:#444b52;letter-spacing:-0.3px;">200000</div>
<svg class="a" style="left:1714.5px;top:732.4px;" width="14" height="12" viewBox="0 0 14 12"><path d="M9.5 2.5H2A1 1 0 0 0 1 3.5V10A1 1 0 0 0 2 11H9A1 1 0 0 0 10 10V7" fill="none" stroke="#f01a1a" stroke-width="1.5"/><path d="M5 8L5.6 5.6L11.2 0.6L13 2.4L7.4 7.4Z" fill="#f01a1a"/></svg>
<svg class="a" style="left:1805px;top:732.9px;" width="13" height="11" viewBox="0 0 13 11"><path d="M5.5 1.5H2A1 1 0 0 0 1 2.5V8.5A1 1 0 0 0 2 9.5H5.5" fill="none" stroke="#f01a1a" stroke-width="1.5"/><path d="M4 4H7.5V1L12 5.5L7.5 10V7H4Z" fill="#f01a1a"/></svg>
<div class="a" style="left:271px;top:758px;width:1593px;height:1px;background:#ececec;"></div>
<div class="t" style="left:29px;width:600px;text-align:center;top:773.95px;font-size:13px;color:#444b52;letter-spacing:-0.23px;">9844192584</div>
<div class="t" style="left:181px;width:600px;text-align:center;top:773.95px;font-size:13px;color:#444b52;letter-spacing:-0.6px;">VENKATESH RAO</div>
<div class="t" style="left:333.4px;width:600px;text-align:center;top:773.95px;font-size:13px;color:#444b52;letter-spacing:-0.25px;">1215119</div>
<div class="t" style="left:444.5px;width:600px;text-align:center;top:773.95px;font-size:13px;color:#444b52;letter-spacing:-0.42px;">IEB - 74015</div>
<div class="t" style="left:583px;width:600px;text-align:center;top:773.95px;font-size:13px;color:#444b52;letter-spacing:-0.09px;">01-08-2025</div>
<svg class="a" style="left:1164.5px;top:774.9px;" width="11" height="11" viewBox="0 0 11 11"><rect x="0" y="0" width="11" height="11" rx="2" fill="#07871b"/><path d="M2.3 5.6L4.6 7.9L8.8 3.4" fill="none" stroke="#fff" stroke-width="1.8"/></svg>
<svg class="a" style="left:1252.5px;top:774.9px;" width="11" height="11" viewBox="0 0 11 11"><rect x="0" y="0" width="11" height="11" rx="2" fill="#07871b"/><path d="M2.3 5.6L4.6 7.9L8.8 3.4" fill="none" stroke="#fff" stroke-width="1.8"/></svg>
<svg class="a" style="left:1354px;top:774.4px;" width="12" height="12" viewBox="0 0 12 12"><circle cx="6" cy="6" r="5.7" fill="#f20d0d"/><path d="M3.8 3.8L8.2 8.2M8.2 3.8L3.8 8.2" stroke="#fff" stroke-width="1.7"/></svg>
<svg class="a" style="left:1497px;top:774.4px;" width="12" height="12" viewBox="0 0 12 12"><circle cx="6" cy="6" r="5.7" fill="#f20d0d"/><path d="M3.8 3.8L8.2 8.2M8.2 3.8L3.8 8.2" stroke="#fff" stroke-width="1.7"/></svg>
<div class="t" style="left:1332px;width:600px;text-align:center;top:773.95px;font-size:13px;color:#444b52;letter-spacing:-0.3px;">200000</div>
<svg class="a" style="left:1714.5px;top:774.4px;" width="14" height="12" viewBox="0 0 14 12"><path d="M9.5 2.5H2A1 1 0 0 0 1 3.5V10A1 1 0 0 0 2 11H9A1 1 0 0 0 10 10V7" fill="none" stroke="#f01a1a" stroke-width="1.5"/><path d="M5 8L5.6 5.6L11.2 0.6L13 2.4L7.4 7.4Z" fill="#f01a1a"/></svg>
<svg class="a" style="left:1805px;top:774.9px;" width="13" height="11" viewBox="0 0 13 11"><path d="M5.5 1.5H2A1 1 0 0 0 1 2.5V8.5A1 1 0 0 0 2 9.5H5.5" fill="none" stroke="#f01a1a" stroke-width="1.5"/><path d="M4 4H7.5V1L12 5.5L7.5 10V7H4Z" fill="#f01a1a"/></svg>
<div class="a" style="left:271px;top:800px;width:1593px;height:1px;background:#ececec;"></div>
<div class="t" style="left:29px;width:600px;text-align:center;top:815.95px;font-size:13px;color:#444b52;letter-spacing:-0.23px;">9591411844</div>
<div class="t" style="left:181px;width:600px;text-align:center;top:815.95px;font-size:13px;color:#444b52;letter-spacing:-0.6px;">BOJENDRACHARI</div>
<div class="t" style="left:333.4px;width:600px;text-align:center;top:815.95px;font-size:13px;color:#444b52;letter-spacing:-0.25px;">1215123</div>
<div class="t" style="left:444.5px;width:600px;text-align:center;top:815.95px;font-size:13px;color:#444b52;letter-spacing:-0.42px;">IEB - 74016</div>
<div class="t" style="left:583px;width:600px;text-align:center;top:815.95px;font-size:13px;color:#444b52;letter-spacing:-0.09px;">01-08-2025</div>
<div class="t" style="left:743px;width:600px;text-align:center;top:815.95px;font-size:13px;color:#444b52;letter-spacing:-0.09px;">31-08-2025</div>
<svg class="a" style="left:1164.5px;top:816.9px;" width="11" height="11" viewBox="0 0 11 11"><rect x="0" y="0" width="11" height="11" rx="2" fill="#07871b"/><path d="M2.3 5.6L4.6 7.9L8.8 3.4" fill="none" stroke="#fff" stroke-width="1.8"/></svg>
<svg class="a" style="left:1252.5px;top:816.9px;" width="11" height="11" viewBox="0 0 11 11"><rect x="0" y="0" width="11" height="11" rx="2" fill="#07871b"/><path d="M2.3 5.6L4.6 7.9L8.8 3.4" fill="none" stroke="#fff" stroke-width="1.8"/></svg>
<svg class="a" style="left:1354px;top:816.4px;" width="12" height="12" viewBox="0 0 12 12"><circle cx="6" cy="6" r="5.7" fill="#f20d0d"/><path d="M3.8 3.8L8.2 8.2M8.2 3.8L3.8 8.2" stroke="#fff" stroke-width="1.7"/></svg>
<svg class="a" style="left:1497px;top:816.4px;" width="12" height="12" viewBox="0 0 12 12"><circle cx="6" cy="6" r="5.7" fill="#f20d0d"/><path d="M3.8 3.8L8.2 8.2M8.2 3.8L3.8 8.2" stroke="#fff" stroke-width="1.7"/></svg>
<div class="t" style="left:1332px;width:600px;text-align:center;top:815.95px;font-size:13px;color:#444b52;letter-spacing:-0.3px;">200000</div>
<svg class="a" style="left:1714.5px;top:816.4px;" width="14" height="12" viewBox="0 0 14 12"><path d="M9.5 2.5H2A1 1 0 0 0 1 3.5V10A1 1 0 0 0 2 11H9A1 1 0 0 0 10 10V7" fill="none" stroke="#f01a1a" stroke-width="1.5"/><path d="M5 8L5.6 5.6L11.2 0.6L13 2.4L7.4 7.4Z" fill="#f01a1a"/></svg>
<svg class="a" style="left:1805px;top:816.9px;" width="13" height="11" viewBox="0 0 13 11"><path d="M5.5 1.5H2A1 1 0 0 0 1 2.5V8.5A1 1 0 0 0 2 9.5H5.5" fill="none" stroke="#f01a1a" stroke-width="1.5"/><path d="M4 4H7.5V1L12 5.5L7.5 10V7H4Z" fill="#f01a1a"/></svg>
<div class="a" style="left:271px;top:842px;width:1593px;height:1px;background:#ececec;"></div>
<div class="t" style="left:29px;width:600px;text-align:center;top:857.95px;font-size:13px;color:#444b52;letter-spacing:-0.23px;">9900460473</div>
<div class="t" style="left:181px;width:600px;text-align:center;top:857.95px;font-size:13px;color:#444b52;letter-spacing:-0.6px;">GOPAL H V</div>
<div class="t" style="left:333.4px;width:600px;text-align:center;top:857.95px;font-size:13px;color:#444b52;letter-spacing:-0.25px;">1215105</div>
<div class="t" style="left:444.5px;width:600px;text-align:center;top:857.95px;font-size:13px;color:#444b52;letter-spacing:-0.42px;">IEB - 23064</div>
<div class="t" style="left:583px;width:600px;text-align:center;top:857.95px;font-size:13px;color:#444b52;letter-spacing:-0.09px;">01-08-2025</div>
<div class="t" style="left:743px;width:600px;text-align:center;top:857.95px;font-size:13px;color:#444b52;letter-spacing:-0.09px;">01-08-2025</div>
<svg class="a" style="left:1164.5px;top:858.9px;" width="11" height="11" viewBox="0 0 11 11"><rect x="0" y="0" width="11" height="11" rx="2" fill="#07871b"/><path d="M2.3 5.6L4.6 7.9L8.8 3.4" fill="none" stroke="#fff" stroke-width="1.8"/></svg>
<svg class="a" style="left:1252.5px;top:858.9px;" width="11" height="11" viewBox="0 0 11 11"><rect x="0" y="0" width="11" height="11" rx="2" fill="#07871b"/><path d="M2.3 5.6L4.6 7.9L8.8 3.4" fill="none" stroke="#fff" stroke-width="1.8"/></svg>
<svg class="a" style="left:1354px;top:858.4px;" width="12" height="12" viewBox="0 0 12 12"><circle cx="6" cy="6" r="5.7" fill="#f20d0d"/><path d="M3.8 3.8L8.2 8.2M8.2 3.8L3.8 8.2" stroke="#fff" stroke-width="1.7"/></svg>
<svg class="a" style="left:1497px;top:858.4px;" width="12" height="12" viewBox="0 0 12 12"><circle cx="6" cy="6" r="5.7" fill="#f20d0d"/><path d="M3.8 3.8L8.2 8.2M8.2 3.8L3.8 8.2" stroke="#fff" stroke-width="1.7"/></svg>
<div class="t" style="left:1332px;width:600px;text-align:center;top:857.95px;font-size:13px;color:#444b52;letter-spacing:-0.3px;">200000</div>
<svg class="a" style="left:1714.5px;top:858.4px;" width="14" height="12" viewBox="0 0 14 12"><path d="M9.5 2.5H2A1 1 0 0 0 1 3.5V10A1 1 0 0 0 2 11H9A1 1 0 0 0 10 10V7" fill="none" stroke="#f01a1a" stroke-width="1.5"/><path d="M5 8L5.6 5.6L11.2 0.6L13 2.4L7.4 7.4Z" fill="#f01a1a"/></svg>
<svg class="a" style="left:1805px;top:858.9px;" width="13" height="11" viewBox="0 0 13 11"><path d="M5.5 1.5H2A1 1 0 0 0 1 2.5V8.5A1 1 0 0 0 2 9.5H5.5" fill="none" stroke="#f01a1a" stroke-width="1.5"/><path d="M4 4H7.5V1L12 5.5L7.5 10V7H4Z" fill="#f01a1a"/></svg>
<div class="a" style="left:271px;top:884px;width:1593px;height:1px;background:#ececec;"></div>
<div class="t" style="left:29px;width:600px;text-align:center;top:899.95px;font-size:13px;color:#444b52;letter-spacing:-0.23px;">9606629342</div>
<div class="t" style="left:181px;width:600px;text-align:center;top:899.95px;font-size:13px;color:#444b52;letter-spacing:-0.6px;">GANGADHARA N</div>
<div class="t" style="left:333.4px;width:600px;text-align:center;top:899.95px;font-size:13px;color:#444b52;letter-spacing:-0.25px;">1215133</div>
<div class="t" style="left:444.5px;width:600px;text-align:center;top:899.95px;font-size:13px;color:#444b52;letter-spacing:-0.42px;">IEB - 74004</div>
<div class="t" style="left:583px;width:600px;text-align:center;top:899.95px;font-size:13px;color:#444b52;letter-spacing:-0.09px;">01-08-2025</div>
<svg class="a" style="left:1164.5px;top:900.9px;" width="11" height="11" viewBox="0 0 11 11"><rect x="0" y="0" width="11" height="11" rx="2" fill="#07871b"/><path d="M2.3 5.6L4.6 7.9L8.8 3.4" fill="none" stroke="#fff" stroke-width="1.8"/></svg>
<svg class="a" style="left:1252.5px;top:900.9px;" width="11" height="11" viewBox="0 0 11 11"><rect x="0" y="0" width="11" height="11" rx="2" fill="#07871b"/><path d="M2.3 5.6L4.6 7.9L8.8 3.4" fill="none" stroke="#fff" stroke-width="1.8"/></svg>
<svg class="a" style="left:1354px;top:900.4px;" width="12" height="12" viewBox="0 0 12 12"><circle cx="6" cy="6" r="5.7" fill="#f20d0d"/><path d="M3.8 3.8L8.2 8.2M8.2 3.8L3.8 8.2" stroke="#fff" stroke-width="1.7"/></svg>
<svg class="a" style="left:1497px;top:900.4px;" width="12" height="12" viewBox="0 0 12 12"><circle cx="6" cy="6" r="5.7" fill="#f20d0d"/><path d="M3.8 3.8L8.2 8.2M8.2 3.8L3.8 8.2" stroke="#fff" stroke-width="1.7"/></svg>
<div class="t" style="left:1332px;width:600px;text-align:center;top:899.95px;font-size:13px;color:#444b52;letter-spacing:-0.3px;">200000</div>
<svg class="a" style="left:1714.5px;top:900.4px;" width="14" height="12" viewBox="0 0 14 12"><path d="M9.5 2.5H2A1 1 0 0 0 1 3.5V10A1 1 0 0 0 2 11H9A1 1 0 0 0 10 10V7" fill="none" stroke="#f01a1a" stroke-width="1.5"/><path d="M5 8L5.6 5.6L11.2 0.6L13 2.4L7.4 7.4Z" fill="#f01a1a"/></svg>
<svg class="a" style="left:1805px;top:900.9px;" width="13" height="11" viewBox="0 0 13 11"><path d="M5.5 1.5H2A1 1 0 0 0 1 2.5V8.5A1 1 0 0 0 2 9.5H5.5" fill="none" stroke="#f01a1a" stroke-width="1.5"/><path d="M4 4H7.5V1L12 5.5L7.5 10V7H4Z" fill="#f01a1a"/></svg>
<div class="a" style="left:271px;top:926px;width:1593px;height:1px;background:#ececec;"></div>
<div class="t" style="left:29px;width:600px;text-align:center;top:941.95px;font-size:13px;color:#444b52;letter-spacing:-0.23px;">9241352250</div>
<div class="t" style="left:181px;width:600px;text-align:center;top:941.95px;font-size:13px;color:#444b52;letter-spacing:-0.6px;">RAGHAVENDRA S</div>
<div class="t" style="left:333.4px;width:600px;text-align:center;top:941.95px;font-size:13px;color:#444b52;letter-spacing:-0.25px;">1215101</div>
<div class="t" style="left:444.5px;width:600px;text-align:center;top:941.95px;font-size:13px;color:#444b52;letter-spacing:-0.42px;">IEB - 74002</div>
<div class="t" style="left:583px;width:600px;text-align:center;top:941.95px;font-size:13px;color:#444b52;letter-spacing:-0.09px;">01-08-2025</div>
<svg class="a" style="left:1164.5px;top:942.9px;" width="11" height="11" viewBox="0 0 11 11"><rect x="0" y="0" width="11" height="11" rx="2" fill="#07871b"/><path d="M2.3 5.6L4.6 7.9L8.8 3.4" fill="none" stroke="#fff" stroke-width="1.8"/></svg>
<svg class="a" style="left:1252.5px;top:942.9px;" width="11" height="11" viewBox="0 0 11 11"><rect x="0" y="0" width="11" height="11" rx="2" fill="#07871b"/><path d="M2.3 5.6L4.6 7.9L8.8 3.4" fill="none" stroke="#fff" stroke-width="1.8"/></svg>
<svg class="a" style="left:1354px;top:942.4px;" width="12" height="12" viewBox="0 0 12 12"><circle cx="6" cy="6" r="5.7" fill="#f20d0d"/><path d="M3.8 3.8L8.2 8.2M8.2 3.8L3.8 8.2" stroke="#fff" stroke-width="1.7"/></svg>
<svg class="a" style="left:1497px;top:942.4px;" width="12" height="12" viewBox="0 0 12 12"><circle cx="6" cy="6" r="5.7" fill="#f20d0d"/><path d="M3.8 3.8L8.2 8.2M8.2 3.8L3.8 8.2" stroke="#fff" stroke-width="1.7"/></svg>
<div class="t" style="left:1332px;width:600px;text-align:center;top:941.95px;font-size:13px;color:#444b52;letter-spacing:-0.3px;">200000</div>
<svg class="a" style="left:1714.5px;top:942.4px;" width="14" height="12" viewBox="0 0 14 12"><path d="M9.5 2.5H2A1 1 0 0 0 1 3.5V10A1 1 0 0 0 2 11H9A1 1 0 0 0 10 10V7" fill="none" stroke="#f01a1a" stroke-width="1.5"/><path d="M5 8L5.6 5.6L11.2 0.6L13 2.4L7.4 7.4Z" fill="#f01a1a"/></svg>
<svg class="a" style="left:1805px;top:942.9px;" width="13" height="11" viewBox="0 0 13 11"><path d="M5.5 1.5H2A1 1 0 0 0 1 2.5V8.5A1 1 0 0 0 2 9.5H5.5" fill="none" stroke="#f01a1a" stroke-width="1.5"/><path d="M4 4H7.5V1L12 5.5L7.5 10V7H4Z" fill="#f01a1a"/></svg>
<div class="a" style="left:271px;top:968px;width:1593px;height:1px;background:#ececec;"></div>
<div class="t" style="left:767px;width:600px;text-align:center;top:994.43px;font-size:11.5px;color:#111111;font-weight:bold;letter-spacing:-0.28px;">2025 © Idea Infinity IT Solutions (P)Ltd.(TRM V 2.0)</div>
<div class="a" style="left:1725px;top:1013px;width:31px;height:15px;background:#0b87d8;border-radius:4px 4px 0 0;"></div>
<div class="a" style="left:1725px;top:1013px;width:31px;height:15px;overflow:hidden"><div class="t" style="left:0;width:31px;text-align:center;top:8px;font-size:12px;color:#fff;font-weight:bold">1</div></div>
<div class="a" style="left:1076px;top:317px;width:376px;height:283px;background:#ffffff;border:1px solid #aaaaaa;border-radius:4px 4px 0 0;box-shadow:0 4px 5px rgba(0,0,0,0.15);"></div>
<div class="a" style="left:1077px;top:318px;width:374px;height:34px;background:linear-gradient(#eeeeee 0%,#ffffff 80%);border-radius:3px 3px 0 0;"></div>
<div class="t" style="left:1085.7px;top:327.32px;font-size:13.5px;color:#444444;letter-spacing:-0.45px;">1215201-ANANDA MR</div>
<div class="a" style="left:1081px;top:354px;width:367px;height:22px;background:#ffffff;border:1px solid #aaaaaa;"></div>
<div class="a" style="left:1081px;top:448px;width:352px;height:22px;background:linear-gradient(#3c7ddc,#2a62bc);"></div>
<div class="a" style="left:1077px;top:380px;width:356px;height:216px;overflow:hidden">
<div class="t" style="left:10px;top:6.10px;font-size:12px;color:#444444;letter-spacing:-0.55px;">--Select--</div>
<div class="t" style="left:10px;top:28.55px;font-size:12px;color:#444444;letter-spacing:-0.55px;">1215105-UPENDRA RAO K H MFF</div>
<div class="t" style="left:10px;top:51.00px;font-size:12px;color:#444444;letter-spacing:-0.55px;">1215134-AAAAAAAAAA</div>
<div class="t" style="left:10px;top:73.45px;font-size:12px;color:#ffffff;letter-spacing:-0.55px;">1215201-ANANDA MR</div>
<div class="t" style="left:10px;top:95.90px;font-size:12px;color:#444444;letter-spacing:-0.55px;">1215110-AE HOUSER</div>
<div class="t" style="left:10px;top:118.35px;font-size:12px;color:#444444;letter-spacing:-0.55px;">1215113-AE O AND M II</div>
<div class="t" style="left:10px;top:140.80px;font-size:12px;color:#444444;letter-spacing:-0.55px;">1215116-AE O and M I</div>
<div class="t" style="left:10px;top:163.25px;font-size:12px;color:#444444;letter-spacing:-0.55px;">1215124-AEE GBDR</div>
<div class="t" style="left:10px;top:185.70px;font-size:12px;color:#444444;letter-spacing:-0.55px;">1215126-GOWRIBIDANUR OMU II IP</div>
<div class="t" style="left:10px;top:208.15px;font-size:12px;color:#444444;letter-spacing:-0.55px;">1215127-ALIPURA IP</div>
</div>
<div class="a" style="left:1433px;top:380px;width:15px;height:216px;background:#fafafa;"></div>
<svg class="a" style="left:1435px;top:387px;" width="11" height="8" viewBox="0 0 11 8"><path d="M1 7L5.5 1L10 7Z" fill="#8a8a8a"/></svg>
<div class="a" style="left:1436px;top:403px;width:9px;height:96px;background:#8a8a8a;border-radius:5px;"></div>
<svg class="a" style="left:1435px;top:580px;" width="11" height="8" viewBox="0 0 11 8"><path d="M1 1L5.5 7L10 1Z" fill="#8a8a8a"/></svg>
<svg class="a" style="left:0;top:0" width="1920" height="1080" viewBox="0 0 1920 1080"><path d="M267.0,279.5 C266.3,272.9 263.0,248.7 263.0,240.0 C263.0,231.3 263.4,230.1 267.0,227.6 C270.6,225.1 273.1,225.7 284.4,225.2 C295.7,224.7 324.2,225.2 334.7,224.4 C345.2,223.6 337.9,221.4 347.3,220.5 C356.8,219.6 372.8,219.4 391.4,219.0 C410.0,218.6 447.0,217.3 459.1,218.2 C471.2,219.1 461.7,217.6 463.8,224.4 C465.9,231.2 470.6,249.0 471.7,259.0 C472.8,269.0 474.3,279.8 470.1,284.3 C465.9,288.8 480.1,285.7 446.5,285.8 C412.9,285.9 298.2,285.1 268.6,285.0" fill="none" stroke="#0a74d6" stroke-width="5.5" stroke-linecap="round" stroke-linejoin="round"/><path d="M495.6,202.5 L501,236" fill="none" stroke="#0a74d6" stroke-width="5.5" stroke-linecap="round" stroke-linejoin="round"/><path d="M506.0,231.0 C506.3,227.9 507.3,217.7 508.0,212.5 C508.7,207.3 509.0,201.7 510.0,200.0 C511.0,198.3 511.3,197.5 514.0,202.5 C516.7,207.5 524.0,225.4 526.0,230.0" fill="none" stroke="#0a74d6" stroke-width="5.5" stroke-linecap="round" stroke-linejoin="round"/><path d="M553.8,209.4 C552.3,209.2 548.1,207.3 545.0,208.0 C541.9,208.7 537.1,211.3 535.0,213.8 C532.9,216.2 532.5,220.2 532.5,222.5 C532.5,224.8 532.9,226.7 535.0,227.5 C537.1,228.3 542.1,228.8 545.0,227.5 C547.9,226.2 551.2,223.1 552.5,220.0 C553.8,216.9 552.8,208.6 553.0,208.8 C553.2,208.9 552.6,217.3 553.8,221.0 C554.9,224.7 556.5,228.7 560.0,231.0 C563.5,233.3 572.5,234.3 575.0,235.0" fill="none" stroke="#0a74d6" stroke-width="5.5" stroke-linecap="round" stroke-linejoin="round"/><path d="M596.0,211.0 C595.4,210.0 595.2,206.4 592.5,205.0 C589.8,203.6 583.8,201.9 580.0,202.5 C576.2,203.1 572.3,206.0 570.0,208.8 C567.7,211.5 566.0,215.0 566.0,218.8 C566.0,222.5 567.7,227.5 570.0,231.0 C572.3,234.5 574.3,238.3 580.0,240.0 C585.7,241.7 600.0,240.8 604.0,241.0" fill="none" stroke="#0a74d6" stroke-width="5.5" stroke-linecap="round" stroke-linejoin="round"/><path d="M611,197.5 L617,247" fill="none" stroke="#0a74d6" stroke-width="5.5" stroke-linecap="round" stroke-linejoin="round"/><path d="M615.0,222.5 C615.8,221.7 616.8,218.4 620.0,217.5 C623.2,216.6 630.8,216.2 634.0,217.0 C637.2,217.8 637.7,218.0 639.0,222.5 C640.3,227.0 641.5,240.4 642.0,244.0" fill="none" stroke="#0a74d6" stroke-width="5.5" stroke-linecap="round" stroke-linejoin="round"/><path d="M665.0,197.5 C663.3,197.8 657.8,197.1 655.0,199.0 C652.2,200.9 649.8,204.7 648.5,209.0 C647.2,213.3 646.3,220.2 647.0,225.0 C647.7,229.8 649.9,234.2 652.5,237.5 C655.1,240.8 657.9,243.7 662.5,245.0 C667.1,246.3 675.2,246.6 680.0,245.6 C684.8,244.6 689.2,239.9 691.0,238.8" fill="none" stroke="#0a74d6" stroke-width="5.5" stroke-linecap="round" stroke-linejoin="round"/><path d="M660.0,217.0 C661.2,216.5 665.3,215.7 667.5,214.0 C669.7,212.3 672.1,208.2 673.0,207.0" fill="none" stroke="#0a74d6" stroke-width="5.5" stroke-linecap="round" stroke-linejoin="round"/><path d="M702.5,228.0 C702.5,224.0 699.4,204.2 702.5,203.8 C705.6,203.2 717.3,225.7 721.2,225.0 C725.2,224.3 725.4,203.7 726.2,199.4" fill="none" stroke="#0a74d6" stroke-width="5.5" stroke-linecap="round" stroke-linejoin="round"/><path d="M765.0,205.0 C762.9,204.7 757.1,202.8 752.5,203.0 C747.9,203.2 741.1,204.2 737.5,206.0 C733.9,207.8 731.6,211.2 731.0,213.8 C730.4,216.2 731.7,219.1 734.0,221.0 C736.3,222.9 739.8,224.5 745.0,225.0 C750.2,225.5 760.8,227.5 765.0,223.8 C769.2,220.0 767.5,202.3 770.0,202.5 C772.5,202.7 776.9,219.2 780.0,225.0 C783.1,230.8 787.3,235.4 788.8,237.5" fill="none" stroke="#0a74d6" stroke-width="5.5" stroke-linecap="round" stroke-linejoin="round"/><path d="M795.0,168.8 C795.6,171.5 797.3,174.8 798.8,185.0 C800.2,195.2 802.9,222.5 803.8,230.0" fill="none" stroke="#0a74d6" stroke-width="5.5" stroke-linecap="round" stroke-linejoin="round"/><path d="M800.0,198.0 C802.5,198.1 810.4,198.2 815.0,198.8 C819.6,199.3 822.7,200.0 827.5,201.2 C832.3,202.5 839.2,203.7 843.8,206.0 C848.3,208.3 851.5,210.4 855.0,215.0 C858.5,219.6 861.2,229.8 865.0,233.8 C868.8,237.7 871.2,237.5 877.5,238.8 C883.8,240.0 898.3,240.8 902.5,241.2" fill="none" stroke="#0a74d6" stroke-width="5.5" stroke-linecap="round" stroke-linejoin="round"/><path d="M826.25,202.5 L830,233.75" fill="none" stroke="#0a74d6" stroke-width="5.5" stroke-linecap="round" stroke-linejoin="round"/><path d="M848.0,207.0 C846.3,206.2 841.2,202.8 838.0,202.5 C834.8,202.2 830.3,201.2 829.0,205.0 C827.7,208.8 828.3,221.2 830.0,225.0 C831.7,228.8 835.7,228.7 839.0,227.5 C842.3,226.3 848.2,219.6 850.0,218.0" fill="none" stroke="#0a74d6" stroke-width="5.5" stroke-linecap="round" stroke-linejoin="round"/><path d="M877.5,175.0 C875.8,178.8 869.8,191.0 867.5,197.5 C865.2,204.0 864.0,209.4 863.8,213.8 C863.5,218.1 864.5,221.9 866.0,223.8 C867.5,225.6 870.6,225.6 872.5,225.0 C874.4,224.4 876.7,228.1 877.5,220.0 C878.3,211.9 877.5,183.5 877.5,176.2" fill="none" stroke="#0a74d6" stroke-width="5.5" stroke-linecap="round" stroke-linejoin="round"/><path d="M894.4,186.2 C894.1,191.2 893.2,208.1 892.5,216.2 C891.8,224.4 890.4,231.9 890.0,235.0" fill="none" stroke="#0a74d6" stroke-width="5.5" stroke-linecap="round" stroke-linejoin="round"/><path d="M895.0,212.5 C895.4,215.4 895.8,225.8 897.5,230.0 C899.2,234.2 902.1,236.5 905.0,237.5 C907.9,238.5 912.3,238.8 915.0,236.2 C917.7,233.8 920.2,230.2 921.2,222.5 C922.3,214.8 920.6,190.2 921.2,190.0 C921.9,189.8 924.4,215.8 925.0,221.0" fill="none" stroke="#0a74d6" stroke-width="5.5" stroke-linecap="round" stroke-linejoin="round"/><circle cx="916.9" cy="170.6" r="2.6" fill="#0a74d6"/><circle cx="525.5" cy="268" r="2.2" fill="#0a74d6"/></svg>
<div class="a" style="left:0px;top:1031px;width:1920px;height:1px;background:#c6cfd0;"></div>
<div class="a" style="left:0px;top:1032px;width:1920px;height:48px;background:#cdeff1;"></div>
<svg class="a" style="left:17px;top:1037px;" width="30" height="32" viewBox="0 0 30 32"><path d="M13.5 7 L2 27 Q1 29 3.5 29 H24 Q26.5 29 25.5 27 Z" fill="#f5c20c" stroke="#f5c20c" stroke-width="2" stroke-linejoin="round"/><path d="M8 23Q6 23 6 21Q6 19 8.5 19Q9 16 12.5 16Q16 16 16.5 19Q20 19 20 21.5Q20 23 18 23Z" fill="#3b3b3b"/><path d="M13.5 20L11.5 24H13.8L12.5 27" fill="none" stroke="#f5c20c" stroke-width="1"/><circle cx="21" cy="9" r="7.8" fill="#d42d21"/><text x="21" y="13" text-anchor="middle" font-family="Liberation Sans" font-size="11" fill="#fff">4</text></svg>
<div class="t" style="left:51px;top:1041.80px;font-size:12px;color:#1b1b1b;letter-spacing:0.1px;">Thunderstorm w...</div>
<div class="t" style="left:50.3px;top:1057.60px;font-size:12px;color:#5b5b5b;letter-spacing:0.1px;">In effect</div>
<svg class="a" style="left:683px;top:1044px;" width="24" height="24" viewBox="0 0 24 24"><defs><linearGradient id="wg" x1="0" y1="0" x2="1" y2="1"><stop offset="0" stop-color="#52c7f8"/><stop offset="1" stop-color="#0a6fd6"/></linearGradient></defs><rect x="0" y="0" width="11.2" height="11.2" rx="0.8" fill="url(#wg)"/><rect x="12.3" y="0" width="11.2" height="11.2" rx="0.8" fill="url(#wg)"/><rect x="0" y="12.3" width="11.2" height="11.2" rx="0.8" fill="url(#wg)"/><rect x="12.3" y="12.3" width="11.2" height="11.2" rx="0.8" fill="url(#wg)"/></svg>
<div class="a" style="left:719.5px;top:1040.5px;width:218px;height:31px;background:#effbfb;border:1px solid #c3dcdc;border-radius:16px;"></div>
<svg class="a" style="left:730px;top:1048px;" width="16" height="16" viewBox="0 0 16 16"><circle cx="6.5" cy="6.5" r="5.4" fill="none" stroke="#1c1c1c" stroke-width="1.6"/><path d="M10.5 10.5L14.8 14.8" stroke="#1c1c1c" stroke-width="1.8" stroke-linecap="round"/></svg>
<div class="t" style="left:756.5px;top:1049.10px;font-size:14px;color:#5a5a5a;letter-spacing:-0.2px;">Search</div>
<svg class="a" style="left:891px;top:1043px;" width="44" height="27" viewBox="0 0 44 27"><ellipse cx="12" cy="7" rx="11" ry="3.6" transform="rotate(22 12 7)" fill="#3f9a7c"/><ellipse cx="12" cy="7" rx="9" ry="1.6" transform="rotate(22 12 7)" fill="#8fd0b0"/><circle cx="6" cy="4.5" r="2.2" fill="#1c3f9a"/><circle cx="5.5" cy="4.3" r="1" fill="#e8c020"/><circle cx="7" cy="21" r="4.8" fill="#f2851a"/><circle cx="15.5" cy="20" r="5.6" fill="#f9c51b"/><path d="M27 11Q26 7 30 6.5H38Q42 7 41 11Q43.5 14 43 18.5Q42 25 34.5 25.5Q26.5 25 25.5 18.5Q25 14 27 11Z" fill="#c9611b"/><path d="M28 7Q29 2 34 2Q39 2 40 7Z" fill="#f4e6c4"/><path d="M26 12.5H42.5" stroke="#f5c542" stroke-width="2"/><path d="M29 15L31 18L33 15L35 18L37 15L39 18" fill="none" stroke="#f5c542" stroke-width="1"/></svg>
<svg class="a" style="left:951px;top:1044px;" width="25" height="24" viewBox="0 0 25 24"><rect x="0.5" y="7" width="17.5" height="16.5" rx="1.5" fill="#1f1f1f"/><rect x="6.5" y="0.5" width="17.5" height="15.5" rx="1.5" fill="#f3f3f3"/><rect x="6.5" y="7" width="11.5" height="9" fill="#a8a8a8"/></svg>
<svg class="a" style="left:995px;top:1044px;" width="25" height="23" viewBox="0 0 25 23"><defs><linearGradient id="cpta" x1="0" y1="0" x2="0" y2="1"><stop offset="0" stop-color="#19a6f7"/><stop offset="0.5" stop-color="#3aa88a"/><stop offset="1" stop-color="#f0c800"/></linearGradient><linearGradient id="cptb" x1="0.8" y1="0" x2="0.3" y2="1"><stop offset="0" stop-color="#a24df0"/><stop offset="0.5" stop-color="#ec528a"/><stop offset="1" stop-color="#fba648"/></linearGradient></defs><g transform="scale(1.08)"><path d="M4.5 0.5H15.5Q17 0.5 17.5 2L18.5 5H13Q11.5 5 11 6.5L8.5 13.5Q8 15 6.5 15H2Q0 15 0.5 13L3 2Q3.5 0.5 4.5 0.5Z" fill="url(#cpta)"/><path d="M12 0.5H15.5Q17 0.5 17.5 2L18.5 5H11.2Z" fill="#1f4fd6"/><path d="M14 5.5H20Q22.3 5.5 21.7 7.5L18.5 18.5Q18 20.3 16 20.3H6.5Q5 20.3 4.6 18.8L4 15.5H8Q9.8 15.5 10.3 13.8L12.3 7Q12.8 5.5 14 5.5Z" fill="url(#cptb)"/><path d="M4 15.5H9.5L8 20.3H6.5Q5 20.3 4.6 18.8Z" fill="#f05a2a"/></g></svg>
<svg class="a" style="left:1038px;top:1045px;" width="26" height="22" viewBox="0 0 26 22"><path d="M0.5 3Q0.5 0.5 3 0.5H9L12 3H23Q25.5 3 25.5 5.5V19Q25.5 21.5 23 21.5H3Q0.5 21.5 0.5 19Z" fill="#f1b52c"/><rect x="0.5" y="5.5" width="25" height="16" rx="1.5" fill="#fbd155"/><rect x="5" y="13.5" width="16" height="8" rx="1.5" fill="#1b7fd3"/></svg>
<div class="a" style="left:1076px;top:1037px;width:38px;height:38px;background:#e5f6f7;border:1px solid #cfe6e7;border-radius:5px;"></div>
<svg class="a" style="left:1082px;top:1043px;" width="26" height="26" viewBox="0 0 26 26"><defs><linearGradient id="eg1" x1="0" y1="0" x2="1" y2="0.6"><stop offset="0" stop-color="#2c9fe6"/><stop offset="0.5" stop-color="#33b8e8"/><stop offset="1" stop-color="#55d37a"/></linearGradient></defs><circle cx="13" cy="13" r="12.2" fill="url(#eg1)"/><path d="M0.9 12.5Q1 25 13 25.2Q19.5 25.2 23.5 20Q16 22.5 12.5 18.5Q9.5 14.5 12.5 11.8Q5.5 9.5 0.9 12.5Z" fill="#0c55ad"/><path d="M12.5 11.8Q18 10.2 20.5 13.2Q21.8 16.8 17.5 17.8Q13.8 18.2 12.6 15.5Q12 13 12.5 11.8Z" fill="#eaf7fb"/></svg>
<div class="a" style="left:1087px;top:1072px;width:16px;height:3px;background:#2b8a99;border-radius:2px;"></div>
<svg class="a" style="left:1127px;top:1044px;" width="24" height="24" viewBox="0 0 24 24"><circle cx="12" cy="12" r="11.5" fill="#db4437"/><path d="M12 12L23 9A11.5 11.5 0 0 1 7 22.5Z" fill="#f4c20d"/><path d="M12 12L7 22.5A11.5 11.5 0 0 1 1.8 6Z" fill="#0f9d58"/><circle cx="12" cy="12" r="5.4" fill="#fff"/><circle cx="12" cy="12" r="4.2" fill="#4285f4"/></svg>
<svg class="a" style="left:1170px;top:1044px;" width="24" height="24" viewBox="0 0 24 24"><path d="M7 5V2Q7 0.8 8.5 0.8H15.5Q17 0.8 17 2V5" fill="none" stroke="#27a4e8" stroke-width="1.5"/><rect x="0.5" y="4.5" width="23" height="19" rx="3" fill="#134b8c"/><rect x="7" y="9" width="4.5" height="4.5" fill="#f25022"/><rect x="12.5" y="9" width="4.5" height="4.5" fill="#7fba00"/><rect x="7" y="14.5" width="4.5" height="4.5" fill="#00a4ef"/><rect x="12.5" y="14.5" width="4.5" height="4.5" fill="#ffb900"/></svg>
<svg class="a" style="left:1216px;top:1044px;" width="23" height="23" viewBox="0 0 23 23"><rect x="0" y="0" width="22" height="22.5" rx="1.5" fill="#333333"/><path d="M22 12L11 22.5H22Z" fill="#f8d912"/></svg>
<div class="a" style="left:1224px;top:1072px;width:6px;height:2px;background:#6b7a7b;border-radius:1px;"></div>
<svg class="a" style="left:1618px;top:1050px;" width="13" height="8" viewBox="0 0 13 8"><path d="M1 7L6.5 1.5L12 7" fill="none" stroke="#1c1c1c" stroke-width="1.3"/></svg>
<svg class="a" style="left:1648px;top:1047px;" width="20" height="18" viewBox="0 0 20 18"><path d="M3 8A7 7 0 0 1 15 5M15 2V5.5H11.5" fill="none" stroke="#1c1c1c" stroke-width="1.3"/><path d="M15 11A7 7 0 0 1 3 13M3 16.5V13H6.5" fill="none" stroke="#1c1c1c" stroke-width="1.3"/><circle cx="14.5" cy="13.5" r="4" fill="#f7931e"/></svg>
<svg class="a" style="left:1681px;top:1047px;" width="18" height="17" viewBox="0 0 18 17"><path d="M3 13Q0.5 13 0.5 10Q0.5 7 3.5 7Q4.5 3 9 3Q13 3 14 6.5Q17 7 17 10Q17 13 14 13Z" fill="#8d8d8d" stroke="#1c1c1c" stroke-width="1"/><path d="M2 1.5L15 15.5" stroke="#1c1c1c" stroke-width="1.3"/></svg>
<div class="t" style="left:1715px;top:1043.65px;font-size:11px;color:#1c1c1c;">ENG</div>
<div class="t" style="left:1720.5px;top:1059.65px;font-size:11px;color:#1c1c1c;">IN</div>
<svg class="a" style="left:1756px;top:1047px;" width="19" height="18" viewBox="0 0 19 18"><rect x="0.5" y="2" width="12" height="10" fill="none" stroke="#1c1c1c" stroke-width="1.2"/><path d="M3 15H10M6.5 12V15" stroke="#1c1c1c" stroke-width="1.2"/><rect x="13" y="0.5" width="3.5" height="6" rx="1.5" fill="none" stroke="#1c1c1c" stroke-width="1"/><path d="M14.8 6.5V16" stroke="#1c1c1c" stroke-width="1"/></svg>
<svg class="a" style="left:1780px;top:1047px;" width="17" height="16" viewBox="0 0 17 16"><path d="M1 5.5H4L8 2V14L4 10.5H1Z" fill="none" stroke="#1c1c1c" stroke-width="1.1"/><path d="M10.5 5.5Q12 8 10.5 10.5M12.8 3.5Q15.5 8 12.8 12.5" fill="none" stroke="#1c1c1c" stroke-width="1.1"/></svg>
<div class="t" style="left:1277px;width:600px;text-align:right;top:1042.80px;font-size:12px;color:#1c1c1c;">15:34</div>
<div class="t" style="left:1277px;width:600px;text-align:right;top:1058.80px;font-size:12px;color:#1c1c1c;">16-08-2025</div>
<svg class="a" style="left:1884px;top:1047px;" width="17" height="18" viewBox="0 0 17 18"><path d="M3 13V8Q3 3 8 3Q13 3 13 8V13L15 14.5H1Z" fill="#1c1c1c"/><path d="M6.5 15.5Q8 17.5 9.5 15.5" fill="#1c1c1c"/><text x="5" y="12" font-size="6" fill="#fff" font-family="Liberation Sans" font-weight="bold">z</text><text x="12" y="5" font-size="6" fill="#1c1c1c" font-family="Liberation Sans" font-weight="bold">z</text></svg>
</body></html>
